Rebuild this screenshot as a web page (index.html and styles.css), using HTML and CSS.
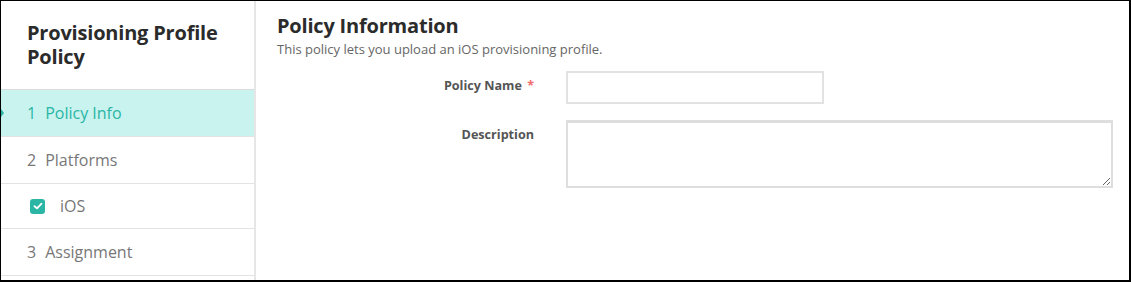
FILE: index.html
```html
<!DOCTYPE html>
<html lang="en">
<head>
    <meta charset="UTF-8">
    <title>Provisioning Profile Policy</title>
    <link rel="stylesheet" href="styles.css">
</head>
<body>
    <div class="frame">
        <div class="sidebar">
            <h2 class="sidebar-title">Provisioning Profile Policy</h2>
            <ul class="steps">
                <li class="step active"><span class="num">1</span>Policy Info</li>
                <li class="step"><span class="num">2</span>Platforms</li>
                <li class="step sub"><span class="check"><svg width="10" height="8" viewBox="0 0 10 8"><path d="M1.5 4.2 L4 6.4 L8.5 1.6" fill="none" stroke="#fff" stroke-width="1.8" stroke-linecap="round" stroke-linejoin="round"/></svg></span>iOS</li>
                <li class="step"><span class="num">3</span>Assignment</li>
            </ul>
        </div>
        <div class="main">
            <h1>Policy Information</h1>
            <p class="desc">This policy lets you upload an iOS provisioning profile.</p>
            <div class="form-row">
                <label class="label">Policy Name <span class="req">*</span></label>
                <input class="input" type="text">
            </div>
            <div class="form-row">
                <label class="label">Description</label>
                <textarea class="textarea"></textarea>
            </div>
        </div>
    </div>
</body>
</html>
```

FILE: styles.css
```css
* {
    box-sizing: border-box;
}
html, body {
    margin: 0;
    padding: 0;
}
body {
    font-family: "Open Sans", Arial, sans-serif;
    background: #fff;
}
.frame {
    width: 1131px;
    height: 282px;
    border-style: solid;
    border-color: #000;
    border-width: 1px 2px 2px 1px;
    display: flex;
    overflow: hidden;
}
.sidebar {
    width: 255px;
    flex-shrink: 0;
    border-right: 2px solid #e6e6e6;
}
.sidebar-title {
    margin: 0;
    padding: 20px 10px 0 26px;
    height: 88px;
    font-size: 20px;
    line-height: 24px;
    font-weight: 700;
    color: #2b2b2b;
    letter-spacing: -0.2px;
}
.steps {
    list-style: none;
    margin: 0;
    padding: 0;
    border-top: 1px solid #dcdcdc;
}
.step {
    position: relative;
    height: 47px;
    display: flex;
    align-items: center;
    padding-left: 26px;
    font-size: 16px;
    color: #777;
    border-bottom: 1px solid #e3e3e3;
}
.step.sub {
    height: 45px;
    padding-left: 29px;
}
.step.active {
    background: #c9f3ef;
    color: #2ab5a5;
}
.step.active::before {
    content: "";
    position: absolute;
    left: 0;
    top: 19px;
    border-left: 3px solid #2ab5a5;
    border-top: 4px solid transparent;
    border-bottom: 4px solid transparent;
}
.num {
    margin-right: 9px;
}
.check {
    width: 15px;
    height: 15px;
    border-radius: 3px;
    background: #2ab5a5;
    display: inline-flex;
    align-items: center;
    justify-content: center;
    margin-right: 15px;
}
.main {
    flex: 1;
    padding: 11px 0 0 21px;
}
.main h1 {
    margin: 0;
    font-size: 20px;
    line-height: 28px;
    font-weight: 700;
    color: #2b2b2b;
    letter-spacing: -0.2px;
}
.desc {
    margin: 0 0 13px;
    font-size: 13px;
    line-height: 18px;
    color: #666;
}
.form-row {
    display: flex;
    align-items: flex-start;
    margin-bottom: 16px;
}
.label {
    width: 289px;
    padding-right: 32px;
    text-align: right;
    font-size: 12.6px;
    font-weight: 700;
    color: #555;
    line-height: 16px;
    padding-top: 7px;
}
.req {
    color: #f26b6b;
    margin-left: 2px;
}
.input {
    width: 258px;
    height: 33px;
    border: 2px solid #e2e2e2;
    margin: 0;
    font-family: inherit;
}
.textarea {
    width: 547px;
    height: 68px;
    border: 2px solid #dedede;
    border-top-width: 3px;
    margin: 0;
    resize: both;
    font-family: inherit;
}
```
